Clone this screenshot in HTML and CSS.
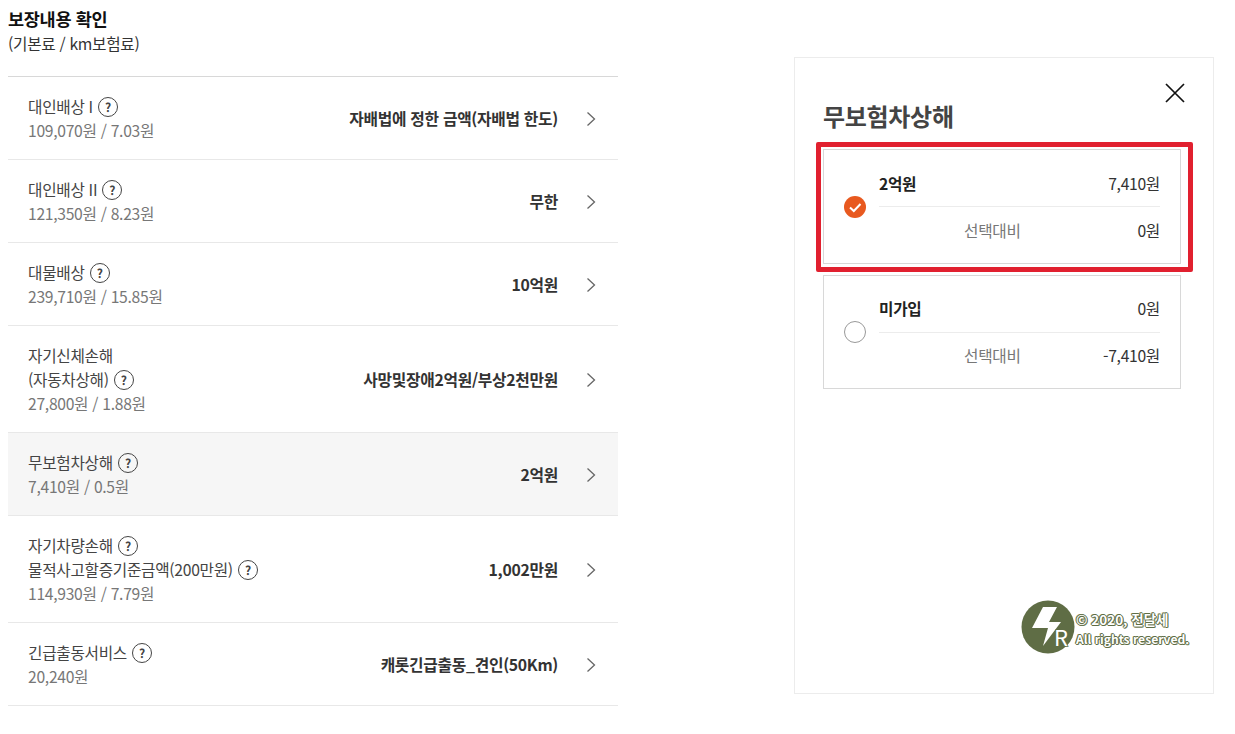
FILE: index.html
```html
<!DOCTYPE html>
<html lang="ko">
<head>
  <meta charset="UTF-8" />
  <title>보장내용 확인</title>
  <link rel="stylesheet" href="styles.css">
</head>
<body>
  <div class="wrap">
    <section class="coverage">
      <h2>보장내용 확인</h2>
      <p class="subtitle">(기본료 / km보험료)</p>

      <ul class="list">
        <li class="row">
          <div class="info">
            <div class="name">대인배상 I <span class="help">?</span></div>
            <div class="price">109,070원 / 7.03원</div>
          </div>
          <strong class="value">자배법에 정한 금액(자배법 한도)</strong>
          <svg class="arrow" viewBox="0 0 10 16"><path d="M1.5 1.5 8.5 8 1.5 14.5" /></svg>
        </li>
        <li class="row">
          <div class="info">
            <div class="name">대인배상 II <span class="help">?</span></div>
            <div class="price">121,350원 / 8.23원</div>
          </div>
          <strong class="value">무한</strong>
          <svg class="arrow" viewBox="0 0 10 16"><path d="M1.5 1.5 8.5 8 1.5 14.5" /></svg>
        </li>
        <li class="row">
          <div class="info">
            <div class="name">대물배상 <span class="help">?</span></div>
            <div class="price">239,710원 / 15.85원</div>
          </div>
          <strong class="value">10억원</strong>
          <svg class="arrow" viewBox="0 0 10 16"><path d="M1.5 1.5 8.5 8 1.5 14.5" /></svg>
        </li>
        <li class="row">
          <div class="info">
            <div class="name">자기신체손해</div>
            <div class="name">(자동차상해) <span class="help">?</span></div>
            <div class="price">27,800원 / 1.88원</div>
          </div>
          <strong class="value">사망및장애2억원/부상2천만원</strong>
          <svg class="arrow" viewBox="0 0 10 16"><path d="M1.5 1.5 8.5 8 1.5 14.5" /></svg>
        </li>
        <li class="row active">
          <div class="info">
            <div class="name">무보험차상해 <span class="help">?</span></div>
            <div class="price">7,410원 / 0.5원</div>
          </div>
          <strong class="value">2억원</strong>
          <svg class="arrow" viewBox="0 0 10 16"><path d="M1.5 1.5 8.5 8 1.5 14.5" /></svg>
        </li>
        <li class="row">
          <div class="info">
            <div class="name">자기차량손해 <span class="help">?</span></div>
            <div class="name">물적사고할증기준금액(200만원) <span class="help">?</span></div>
            <div class="price">114,930원 / 7.79원</div>
          </div>
          <strong class="value">1,002만원</strong>
          <svg class="arrow" viewBox="0 0 10 16"><path d="M1.5 1.5 8.5 8 1.5 14.5" /></svg>
        </li>
        <li class="row">
          <div class="info">
            <div class="name">긴급출동서비스 <span class="help">?</span></div>
            <div class="price">20,240원</div>
          </div>
          <strong class="value">캐롯긴급출동_견인(50Km)</strong>
          <svg class="arrow" viewBox="0 0 10 16"><path d="M1.5 1.5 8.5 8 1.5 14.5" /></svg>
        </li>
      </ul>
    </section>

    <aside class="panel">
      <svg class="close" viewBox="0 0 20 20"><path d="M1 1 19 19M19 1 1 19" /></svg>
      <h3>무보험차상해</h3>

      <div class="option selected">
        <span class="radio">
          <svg viewBox="0 0 22 22"><path d="M6 11.5 9.800 15 16.500 8" /></svg>
        </span>
        <div class="detail">
          <div class="line top"><strong>2억원</strong><span>7,410원</span></div>
          <div class="line"><em>선택대비</em><span>0원</span></div>
        </div>
      </div>

      <div class="option">
        <span class="radio"></span>
        <div class="detail">
          <div class="line top"><strong>미가입</strong><span>0원</span></div>
          <div class="line"><em>선택대비</em><span>-7,410원</span></div>
        </div>
      </div>

      <div class="highlight"></div>

      <div class="mark">
        <svg class="mark-logo" viewBox="0 0 54 54">
          <circle cx="27" cy="27" r="26.500" fill="#5f6d45" />
          <path d="M22 7H36L28 22H40L22 46 27 28H11Z" fill="#fff" />
          <text class="mark-r" x="33" y="46">R</text>
        </svg>
        <div class="mark-text">
          <div class="mark-copy">© 2020, 전달세</div>
          <div>All rights reserved.</div>
        </div>
      </div>
    </aside>
  </div>
</body>
</html>
```

FILE: styles.css
```css
* {
  box-sizing: border-box;
}

body {
  margin: 0;
  background: #fff;
  color: #222;
  font-family: "Noto Sans CJK KR", "Noto Sans", sans-serif;
  font-size: 15.7px;
  letter-spacing: -0.3px;
}

.wrap {
  display: flex;
  align-items: flex-start;
  padding-left: 8px;
}

.coverage {
  width: 610px;
  flex: none;
}

h2 {
  margin: 8px 0 0;
  font-size: 17.5px;
  line-height: 22px;
  font-weight: 700;
  color: #111;
}

.subtitle {
  margin: 3px 0 21px;
  line-height: 22px;
  color: #333;
}

.list {
  margin: 0;
  padding: 0;
  list-style: none;
  border-top: 1px solid #d8d8d8;
}

.row {
  display: flex;
  align-items: center;
  padding: 17px 22px 17px 20px;
  border-bottom: 1px solid #e8e8e8;
}

.row.active {
  background: #f6f6f6;
}

.info {
  flex: 1;
  margin: 1px 0 -1px;
  line-height: 24px;
}

.name {
  height: 24px;
  color: #444;
}

.price {
  height: 24px;
  color: #777;
}

.help {
  display: inline-flex;
  align-items: center;
  justify-content: center;
  width: 20px;
  height: 20px;
  margin-left: 1px;
  border: 1px solid #444;
  border-radius: 50%;
  font-size: 12px;
  font-weight: 700;
  line-height: 1;
  vertical-align: 1px;
}

.value {
  font-size: 15.8px;
  font-weight: 700;
  color: #333;
}

.arrow {
  width: 10px;
  height: 16px;
  margin: 1px 0 0 28px;
  fill: none;
  stroke: #666;
  stroke-width: 1.3;
}

.panel {
  position: relative;
  width: 420px;
  height: 637px;
  margin: 57px 0 0 176px;
  padding: 42px 32px 0 28px;
  border: 1px solid #ececec;
}

.close {
  position: absolute;
  top: 25px;
  right: 28px;
  width: 20px;
  height: 20px;
  fill: none;
  stroke: #111;
  stroke-width: 1.7;
}

h3 {
  margin: 0 0 17px;
  font-size: 24px;
  line-height: 32px;
  font-weight: 700;
  color: #444;
}

.option {
  display: flex;
  align-items: center;
  height: 114px;
  margin-bottom: 11px;
  padding: 0 20px;
  border: 1px solid #d8d8d8;
}

.option.selected {
  height: 115px;
}

.radio {
  flex: none;
  width: 22px;
  height: 22px;
  margin-right: 13px;
  border: 1px solid #999;
  border-radius: 50%;
}

.selected .radio {
  border: 0;
  background: #e8591f;
}

.radio svg {
  display: block;
  fill: none;
  stroke: #fff;
  stroke-width: 2;
}

.detail {
  flex: 1;
}

.line {
  display: flex;
  justify-content: space-between;
  height: 46px;
  align-items: center;
  color: #333;
}

.line.top {
  height: 47px;
  border-bottom: 1px solid #ececec;
}

.line strong {
  font-weight: 700;
  color: #222;
}

.line em {
  margin-left: 85px;
  font-style: normal;
  color: #777;
}

.highlight {
  position: absolute;
  top: 84px;
  left: 21px;
  width: 377px;
  height: 130px;
  border: 5px solid #e1202f;
  border-radius: 2px;
}

.mark {
  position: absolute;
  top: 542px;
  left: 226px;
  display: flex;
  align-items: center;
}

.mark-logo {
  width: 54px;
  height: 54px;
  margin-right: 1px;
}

.mark-r {
  font-size: 22px;
  letter-spacing: 0;
  fill: #fff;
  stroke: #5f6d45;
  stroke-width: 1.5;
  paint-order: stroke;
}

.mark-text {
  margin-top: 4px;
  font-size: 12.1px;
  line-height: 19px;
  font-weight: 700;
  letter-spacing: 0;
  color: #fff;
  white-space: nowrap;
  text-shadow: 1px 0 0 #5f6d45, -1px 0 0 #5f6d45, 0 1px 0 #5f6d45, 0 -1px 0 #5f6d45, 1px 1px 0 #8b9775, -1px -1px 0 #8b9775;
}

.mark-copy {
  font-size: 13.5px;
}
```
